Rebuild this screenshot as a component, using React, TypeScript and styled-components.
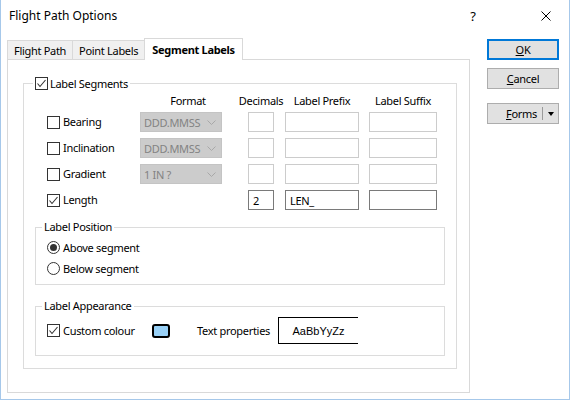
import styled, { createGlobalStyle } from "styled-components";
import { FC, ReactNode } from "react";

const GlobalStyle = createGlobalStyle`
  html, body {
    margin: 0;
    padding: 0;
    background: #fff;
  }
  body {
    font-family: "Segoe UI", "Noto Sans", sans-serif;
    font-size: 11px;
    letter-spacing: -0.3px;
    color: #000;
  }
`;

interface CheckProps {
  checked?: boolean;
}

const Checkbox: FC<CheckProps> = ({ checked }) => (
  <CheckBoxBox>
    {checked && (
      <svg width="11" height="11" viewBox="0 0 11 11">
        <polyline points="1.5,5.5 4,8.5 9.5,2" fill="none" stroke="#333" strokeWidth="1.1" />
      </svg>
    )}
  </CheckBoxBox>
);

const Radio: FC<CheckProps> = ({ checked }) => (
  <RadioCircle>{checked && <RadioDot />}</RadioCircle>
);

const Chevron = () => (
  <svg width="9" height="5" viewBox="0 0 9 5">
    <polyline points="0.5,0.5 4.5,4.5 8.5,0.5" fill="none" stroke="#a8a8a8" strokeWidth="1" />
  </svg>
);

const CloseGlyph = () => (
  <svg width="10" height="10" viewBox="0 0 10 10">
    <path d="M0.5 0.5 L9.5 9.5 M9.5 0.5 L0.5 9.5" stroke="#000" strokeWidth="1" />
  </svg>
);

interface RowProps {
  label: string;
  checked?: boolean;
  format?: string;
  decimals?: string;
  prefix?: string;
}

const SegmentRow: FC<RowProps> = ({ label, checked, format, decimals, prefix }) => (
  <>
    <RowLabel>
      <Checkbox checked={checked} />
      <RowText>{label}</RowText>
    </RowLabel>
    <div>
      {format && (
        <Combo>
          <span>{format}</span>
          <Chevron />
        </Combo>
      )}
    </div>
    <TextBox $w={26} $enabled={checked}>{decimals}</TextBox>
    <TextBox $w={74} $enabled={checked}>{prefix}</TextBox>
    <TextBox $w={68} $enabled={checked} />
  </>
);

const Button: FC<{ children: ReactNode; primary?: boolean }> = ({ children, primary }) => (
  <PushButton $primary={primary}>{children}</PushButton>
);

const App: FC = () => (
  <>
    <GlobalStyle />
    <Window>
      <TitleBar>
        <Title>Flight Path Options</Title>
        <HelpButton>?</HelpButton>
        <CloseButton>
          <CloseGlyph />
        </CloseButton>
      </TitleBar>
      <Body>
        <TabArea>
          <TabStrip>
            <Tab>Flight Path</Tab>
            <Tab>Point Labels</Tab>
            <Tab $active>Segment Labels</Tab>
          </TabStrip>
          <Panel>
            <Group>
              <Legend>
                <Checkbox checked />
                <span>Label Segments</span>
              </Legend>
              <FieldGrid>
                <span />
                <Header $w={82} $shift={14}>Format</Header>
                <Header $w={26}>Decimals</Header>
                <Header $w={74}>Label Prefix</Header>
                <Header $w={68}>Label Suffix</Header>
                <SegmentRow label="Bearing" format="DDD.MMSS" />
                <SegmentRow label="Inclination" format="DDD.MMSS" />
                <SegmentRow label="Gradient" format="1 IN ?" />
                <SegmentRow label="Length" checked decimals="2" prefix="LEN_" />
              </FieldGrid>
              <SubGroup>
                <SubLegend>Label Position</SubLegend>
                <RadioList>
                  <RadioRow>
                    <Radio checked />
                    <span>Above segment</span>
                  </RadioRow>
                  <RadioRow>
                    <Radio />
                    <span>Below segment</span>
                  </RadioRow>
                </RadioList>
              </SubGroup>
              <SubGroup $gap={13}>
                <SubLegend>Label Appearance</SubLegend>
                <AppearanceRow>
                  <AppearanceCheck>
                    <Checkbox checked />
                    <span>Custom colour</span>
                  </AppearanceCheck>
                  <Swatch />
                  <PropsLabel>Text properties</PropsLabel>
                  <FontSample>AaBbYyZz</FontSample>
                </AppearanceRow>
              </SubGroup>
            </Group>
          </Panel>
        </TabArea>
        <ButtonColumn>
          <Button primary>
            <u>O</u>K
          </Button>
          <Button>
            <u>C</u>ancel
          </Button>
          <FormsButton>
            <FormsLabel>
              <u>F</u>orms
            </FormsLabel>
            <Divider />
            <DropArrow />
          </FormsButton>
        </ButtonColumn>
      </Body>
    </Window>
  </>
);

export default App;

const Window = styled.div`
  width: 570px;
  height: 400px;
  box-sizing: border-box;
  border: 1px solid #a6c8ea;
  border-top: none;
  background: #fff;
  display: flex;
  flex-direction: column;
`;

const TitleBar = styled.div`
  height: 31px;
  display: flex;
  align-items: center;
  padding-left: 8px;
`;

const Title = styled.div`
  flex: 1;
  font-size: 12px;
  letter-spacing: 0;
`;

const HelpButton = styled.div`
  width: 46px;
  margin-right: 27px;
  text-align: center;
  font-size: 13px;
  letter-spacing: 0;
`;

const CloseButton = styled.div`
  width: 46px;
  height: 31px;
  display: flex;
  align-items: center;
  justify-content: center;
`;

const Body = styled.div`
  display: flex;
  padding: 7px 0 0 6px;
`;

const TabArea = styled.div`
  width: 463px;
  display: flex;
  flex-direction: column;
`;

const TabStrip = styled.div`
  display: flex;
  align-items: flex-end;
  height: 21px;
  padding-left: 1px;
`;

const Tab = styled.div<{ $active?: boolean }>`
  box-sizing: border-box;
  height: ${(p) => (p.$active ? 22 : 19)}px;
  margin-bottom: ${(p) => (p.$active ? -1 : 0)}px;
  padding: 0 ${(p) => (p.$active ? 7 : 6)}px;
  display: flex;
  align-items: center;
  border: 1px solid #d9d9d9;
  border-bottom: none;
  margin-left: -1px;
  background: ${(p) => (p.$active ? "#fff" : "#f0f0f0")};
  font-weight: ${(p) => (p.$active ? 700 : 400)};
  position: relative;
  z-index: ${(p) => (p.$active ? 1 : 0)};
`;

const Panel = styled.div`
  height: 334px;
  box-sizing: border-box;
  border: 1px solid #d9d9d9;
  padding: 15px 12px 0 15px;
`;

const Group = styled.fieldset`
  margin: 0;
  padding: 0 0 12px;
  border: 1px solid #dcdcdc;
  min-width: 0;
`;

const Legend = styled.legend`
  margin-left: 9px;
  padding: 0 2px;
  height: 16px;
  display: flex;
  align-items: center;
  gap: 2px;
`;

const SubGroup = styled.fieldset<{ $gap?: number }>`
  margin: ${(p) => p.$gap ?? 9}px 11px 0;
  padding: 0;
  border: 1px solid #dcdcdc;
  min-width: 0;
`;

const SubLegend = styled.legend`
  margin-left: 6px;
  padding: 0 2px;
  height: 16px;
  line-height: 16px;
`;

const FieldGrid = styled.div`
  display: grid;
  grid-template-columns: 93px 108px 37px 84px 68px;
  grid-template-rows: 12px repeat(4, 20px);
  row-gap: 6px;
  margin: 3px 0 0 23px;
  align-items: center;
`;

const Header = styled.div<{ $w: number; $shift?: number }>`
  width: ${(p) => p.$w}px;
  padding-left: ${(p) => p.$shift ?? 0}px;
  box-sizing: border-box;
  display: flex;
  justify-content: center;
  white-space: nowrap;
  align-self: start;
  line-height: 14px;
`;

const RowLabel = styled.div`
  display: flex;
  align-items: center;
  gap: 3px;
`;

const RowText = styled.span`
  margin-top: -2px;
`;

const CheckBoxBox = styled.span`
  width: 13px;
  height: 13px;
  box-sizing: border-box;
  border: 1px solid #333;
  background: #fff;
  display: inline-flex;
  align-items: center;
  justify-content: center;
  flex: none;
`;

const Combo = styled.div`
  width: 82px;
  height: 20px;
  box-sizing: border-box;
  background: #cccccc;
  border: 1px solid #c4c4c4;
  color: #838383;
  display: flex;
  align-items: center;
  justify-content: space-between;
  padding: 0 5px 0 3px;
`;

const TextBox = styled.div<{ $w: number; $enabled?: boolean }>`
  width: ${(p) => p.$w}px;
  height: 20px;
  box-sizing: border-box;
  border: 1px solid ${(p) => (p.$enabled ? "#7a7a7a" : "#cccccc")};
  background: #fff;
  display: flex;
  align-items: center;
  padding-left: 4px;
`;

const RadioList = styled.div`
  padding: 2px 0 5px 11px;
`;

const RadioRow = styled.div`
  height: 21px;
  display: flex;
  align-items: center;
  gap: 3px;
`;

const RadioCircle = styled.span`
  width: 13px;
  height: 13px;
  box-sizing: border-box;
  border: 1px solid #333;
  border-radius: 50%;
  display: inline-flex;
  align-items: center;
  justify-content: center;
`;

const RadioDot = styled.span`
  width: 7px;
  height: 7px;
  border-radius: 50%;
  background: #333;
`;

const AppearanceRow = styled.div`
  height: 27px;
  display: flex;
  align-items: center;
  padding: 3px 0 11px 11px;
`;

const AppearanceCheck = styled.div`
  width: 105px;
  display: flex;
  align-items: center;
  gap: 3px;
`;

const Swatch = styled.div`
  width: 18px;
  height: 14px;
  box-sizing: border-box;
  border: 2px solid #000;
  border-radius: 3px;
  background: #99d1f7;
  margin-right: 27px;
`;

const PropsLabel = styled.div`
  width: 81px;
`;

const FontSample = styled.div`
  width: 80px;
  height: 27px;
  box-sizing: border-box;
  border: 1px solid #000;
  border-right: none;
  display: flex;
  align-items: center;
  justify-content: center;
  font-family: "Liberation Sans", Arial, sans-serif;
  font-size: 11px;
  letter-spacing: 0;
`;

const ButtonColumn = styled.div`
  width: 72px;
  margin-left: 17px;
  padding-top: 1px;
  display: flex;
  flex-direction: column;
`;

const PushButton = styled.div<{ $primary?: boolean }>`
  height: 21px;
  box-sizing: border-box;
  background: #e1e1e1;
  border: ${(p) => (p.$primary ? "2px solid #0078d7" : "1px solid #adadad")};
  display: flex;
  align-items: center;
  justify-content: center;
  margin-bottom: 8px;
`;

const FormsButton = styled.div`
  height: 21px;
  box-sizing: border-box;
  background: #e1e1e1;
  border: 1px solid #adadad;
  display: flex;
  align-items: center;
  margin-top: 6px;
`;

const FormsLabel = styled.div`
  flex: 1;
  text-align: right;
  padding-right: 5px;
`;

const Divider = styled.div`
  width: 1px;
  height: 13px;
  background: #9a9a9a;
  margin-right: 5px;
`;

const DropArrow = styled.div`
  width: 0;
  height: 0;
  border-left: 3.5px solid transparent;
  border-right: 3.5px solid transparent;
  border-top: 4px solid #000;
  margin-right: 4px;
`;
